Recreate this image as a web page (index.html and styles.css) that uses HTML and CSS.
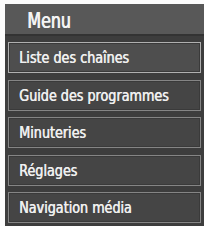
FILE: index.html
```html
<!DOCTYPE html>
<html lang="fr">
<head>
    <meta charset="UTF-8">
    <title>Menu</title>
    <link rel="stylesheet" href="styles.css">
</head>
<body>
    <div class="panel">
        <div class="panel-header"><span class="label">Menu</span></div>
        <ul class="menu-list">
            <li class="menu-item active"><span class="label">Liste des chaînes</span></li>
            <li class="menu-item"><span class="label">Guide des programmes</span></li>
            <li class="menu-item"><span class="label">Minuteries</span></li>
            <li class="menu-item"><span class="label">Réglages</span></li>
            <li class="menu-item"><span class="label">Navigation média</span></li>
        </ul>
    </div>
</body>
</html>
```

FILE: styles.css
```css
* {
    margin: 0;
    padding: 0;
    box-sizing: border-box;
}

body {
    background-color: #fcfcfc;
    font-family: "DejaVu Sans Condensed", "DejaVu Sans", sans-serif;
}

.panel {
    margin: 4px 0 0 5px;
    width: 199px;
    height: 222px;
    background-color: #3d3d3d;
}

/* condensed TV-style lettering */
.label {
    display: inline-block;
    transform: scaleX(0.86);
    transform-origin: left center;
    white-space: nowrap;
}

.panel-header {
    height: 32px;
    padding-left: 22px;
    line-height: 34px;
    font-size: 20.5px;
    color: #f4f4f4;
    text-shadow: 0.9px 0 0 #f4f4f4;
    background-color: #585858;
    border-bottom: 2px solid #333;
}

.menu-list {
    list-style: none;
    display: flex;
    flex-direction: column;
    gap: 6.5px;
    padding: 6px 3px 0 3px;
}

.menu-item {
    height: 31px;
    padding-left: 10px;
    line-height: 30px;
    font-size: 16.5px;
    color: #f0f0f0;
    text-shadow: 0.6px 0 0 #f0f0f0;
    background-color: #454545;
    border: 1px solid #858585;
    box-shadow: inset 0 0 0 1px #3a3a3a;
}

.menu-item.active {
    background-color: #4e4e4e;
    border-color: #b0b0b0;
}
```
